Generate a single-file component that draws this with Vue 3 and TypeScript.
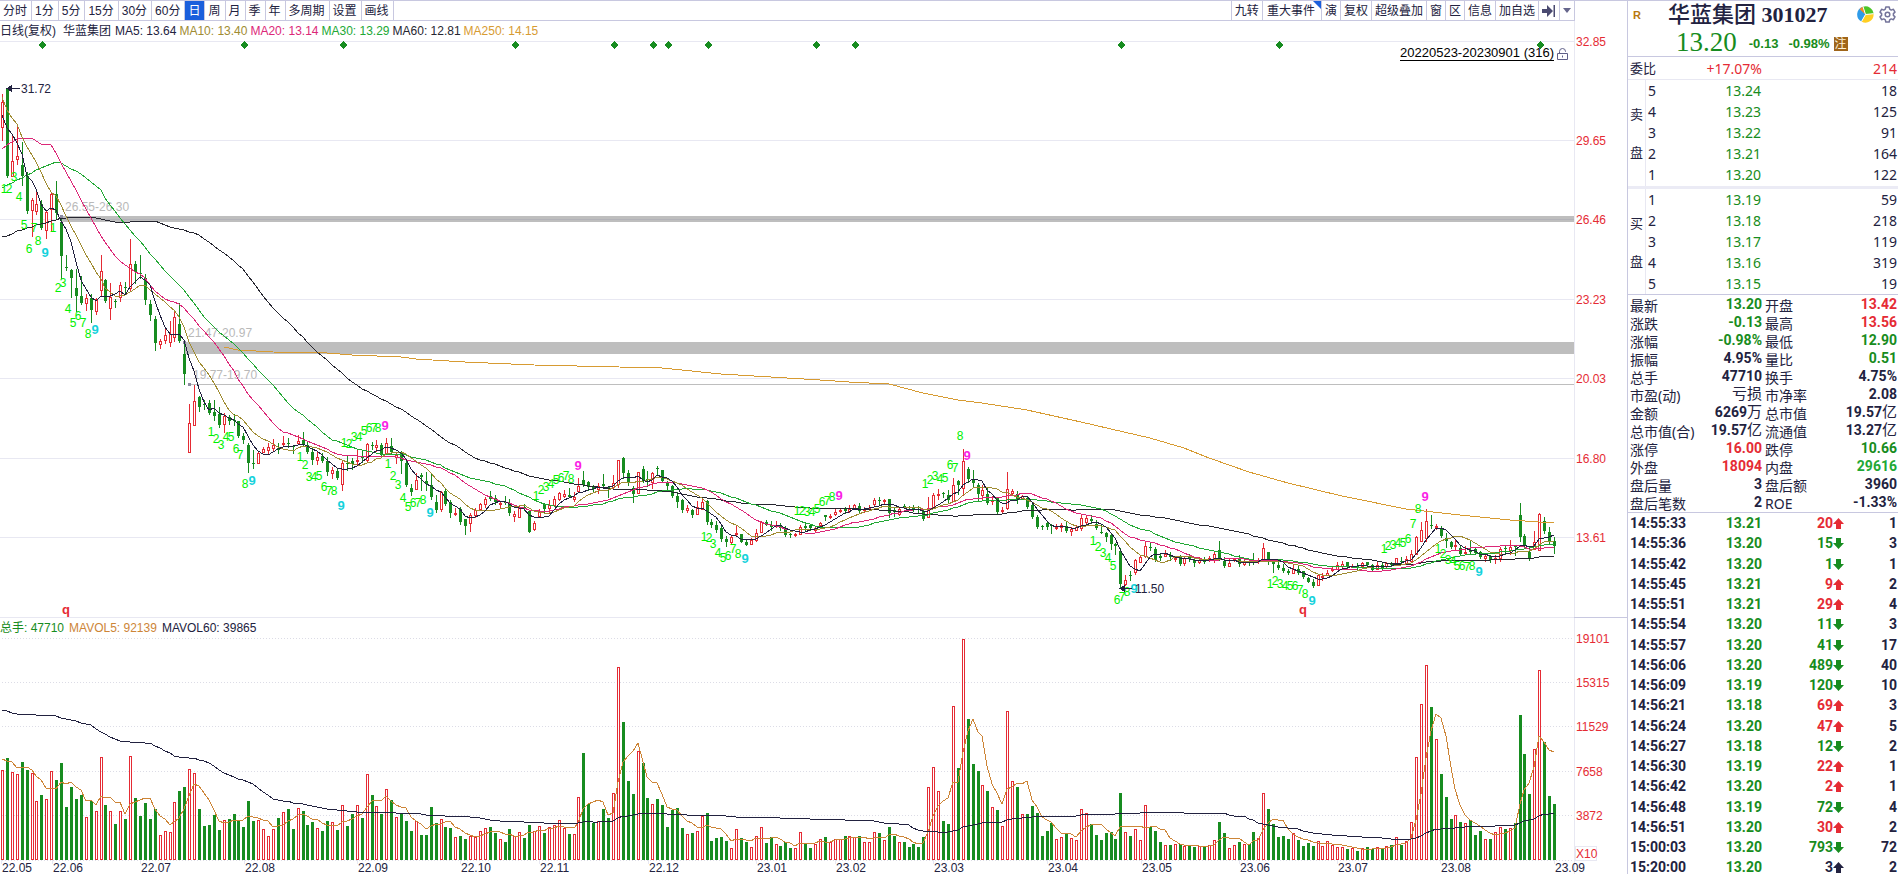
<script setup lang="ts">
import { computed, onBeforeUnmount, onMounted, ref } from 'vue'

type Bar = { up: boolean; high: number; top: number; bottom: number; low: number; vol: number }

// Each bar: r (rise) or g (fall), high, body top, body bottom, low, volume height.
const raw = `
r94,102,127,141,90 g88,89,176,177,102 r134,161,176,177,88 r124,156,159,165,86 g142,165,176,185,98 g172,176,211,213,90
r198,200,210,237,87 r192,204,211,215,59 g200,204,228,229,65 r211,212,230,239,61 r193,194,209,232,89 g181,194,213,218,80
g218,222,256,278,97 g255,267,268,270,53 g269,270,278,297,73 g269,288,296,311,61 g276,296,303,304,65 r294,298,303,311,43
g294,298,310,322,59 r298,299,311,315,49 r255,271,290,297,103 g279,280,301,302,55 r283,297,308,320,49 g299,301,302,307,36
r282,285,297,302,49 g282,287,288,294,41 r239,264,288,292,104 g261,264,272,283,62 g255,273,274,278,44 g274,278,300,304,57
g300,304,315,320,41 g316,319,343,350,51 r339,341,344,349,25 r327,335,340,344,29 r321,334,342,347,28 r311,317,337,342,58
g303,324,341,342,69 g341,354,374,384,73 r404,423,452,452,91 r385,401,425,426,87 g396,397,407,411,51 g400,404,405,409,34
g400,403,413,414,35 g400,412,416,420,45 g407,414,425,427,30 r413,416,424,433,40 g415,417,421,424,41 g414,420,421,425,46
g421,421,436,437,39 g433,436,440,443,33 g443,445,463,472,59 g450,463,464,468,39 r452,453,463,464,40 r447,449,452,452,31
r443,447,450,454,24 r439,445,448,452,31 g443,448,450,453,42 r436,443,444,446,48 g438,443,444,447,51 g445,446,447,453,31
r435,441,443,445,52 g432,440,444,445,49 g441,445,452,453,35 g447,452,460,464,38 r451,457,460,465,32 g453,456,461,462,29
g457,461,472,475,39 r467,470,473,479,38 g469,471,478,479,30 r460,463,484,491,55 g455,463,464,470,34 g458,461,464,469,46
r449,460,461,466,55 g450,457,458,462,42 r443,444,460,462,86 g442,445,446,449,65 r440,445,447,452,54 g443,445,455,456,46
r438,443,453,455,71 g438,446,452,453,60 r453,455,457,464,43 g451,453,461,473,46 g461,463,485,486,39 g484,488,492,495,29
r473,480,489,490,39 g473,475,477,490,25 g472,481,484,490,25 g474,485,497,499,53 g495,502,510,512,37 r491,492,509,512,41
g488,491,504,505,33 g500,502,513,517,32 r508,513,514,516,23 g507,509,522,524,24 g519,519,526,534,21 r513,515,523,532,24
r508,510,515,518,23 r503,504,509,510,29 r497,499,504,508,32 g491,496,499,500,33 g495,498,502,504,27 r501,503,504,509,21
g496,502,503,504,18 g499,503,513,515,31 r511,514,516,522,24 r506,508,517,518,28 g504,507,508,510,22 g510,511,532,532,35
r521,523,529,531,29 r509,512,516,518,34 g503,504,509,512,27 r500,505,508,514,33 r496,499,505,507,35 r492,493,499,501,40
r490,494,496,498,32 g488,495,497,497,26 r492,497,499,502,26 r478,486,491,493,63 g471,480,485,486,107 g481,482,487,490,56
g485,487,489,492,37 r483,486,489,494,39 g474,484,486,487,51 g486,487,488,497,42 r475,483,487,489,67 r460,460,484,488,193
g457,458,473,478,138 g470,473,482,485,79 g486,488,494,502,66 r472,472,493,494,109 g466,469,481,482,97 g471,479,480,486,62
r472,473,482,489,56 g466,468,469,475,61 g470,470,481,482,55 g481,482,486,489,33 g485,486,496,497,50 g492,496,502,507,52
g499,500,510,512,32 r505,508,510,513,26 g509,510,515,517,27 r501,507,514,515,29 r497,502,509,510,44 g500,501,522,524,47
g519,522,525,527,19 g521,525,530,532,22 g526,528,539,541,23 g536,539,542,546,19 r535,537,542,544,12 r525,533,534,537,31
g534,534,542,542,22 g539,542,545,545,18 r538,540,544,545,13 r529,533,540,542,24 r521,522,532,533,33 g520,522,525,525,17
g521,525,527,530,23 r521,525,526,528,16 g523,525,528,530,14 g526,529,535,536,18 g533,534,535,537,12 r533,534,535,537,12
r525,527,534,535,28 g522,526,528,531,16 g524,525,528,530,12 r526,528,530,532,16 r522,523,525,525,21 g515,515,517,520,23
r514,516,517,519,18 r509,512,514,516,21 r508,510,511,513,21 g507,508,511,513,24 r505,509,511,513,24 r504,505,508,508,23
g503,506,511,512,24 r507,509,510,513,18 r505,508,509,510,18 r498,500,504,506,28 g497,500,501,504,27 r499,500,501,504,20
g499,499,513,517,33 g507,510,512,516,24 r508,509,514,516,18 g504,506,507,508,18 g506,507,508,509,13 g505,508,509,511,16
g506,509,510,512,13 g509,511,519,520,23 r497,508,517,518,73 r493,495,508,509,93 r489,494,495,500,69 g492,493,494,497,39
g490,495,500,502,36 r478,485,501,501,154 g480,481,485,494,92 r449,461,488,496,221 g467,469,479,482,141 g470,480,483,487,96
g483,485,494,501,89 r485,490,495,500,75 g488,494,503,504,69 r496,500,501,505,53 g497,498,512,513,50 r507,510,511,513,34
r472,489,508,510,149 r489,491,493,495,79 g491,494,499,503,73 r495,496,498,499,46 g497,498,507,508,46 g503,505,517,518,54
g515,517,527,528,47 g525,526,527,529,24 g522,523,527,529,29 g524,525,526,533,37 r524,527,528,530,21 r523,525,527,532,23
g521,526,531,532,27 r527,529,531,536,22 r525,527,530,531,20 r515,518,528,531,51 r515,518,522,524,47 g515,519,521,523,36
g520,524,528,529,25 g524,532,533,533,20 g532,533,537,541,27 g534,535,544,549,28 g543,544,546,554,21 g548,551,584,588,67
r575,580,584,586,28 g571,575,576,580,24 r559,560,572,575,31 r555,557,562,563,20 r542,546,556,558,55 g542,547,548,550,33
g547,549,560,561,29 g554,556,558,560,18 r550,554,556,557,15 g552,555,557,560,15 r556,558,559,562,16 g555,557,564,565,16
r556,558,563,566,14 g554,556,559,561,14 g557,560,563,566,13 r557,560,562,564,14 g557,561,562,563,13 r556,558,560,562,15
r552,554,560,563,20 g541,550,558,560,38 g557,561,566,567,27 r558,563,566,567,12 r558,559,560,562,15 g555,559,564,566,18
r558,562,564,566,16 g560,562,563,565,16 g553,562,563,564,28 r558,560,561,564,22 r543,548,559,561,67 g552,552,561,564,51
g561,562,564,572,36 g562,565,568,569,23 g564,568,571,572,24 g569,571,573,574,21 r565,569,573,573,27 g566,569,573,574,20
g571,571,577,578,14 g577,578,582,582,17 g579,582,586,587,14 r574,575,585,586,19 r573,576,577,581,14 r570,573,575,576,19
r566,569,570,572,15 r562,565,569,570,13 r561,564,566,568,13 g562,562,567,568,11 r564,566,567,568,12 g563,566,567,570,9
r562,563,566,567,12 g562,562,565,566,13 g564,565,570,571,11 r562,565,569,570,13 g562,565,568,570,11 r562,563,566,568,14
g562,564,565,566,15 r558,558,564,565,23 g557,561,562,564,15 r556,559,563,564,19 r550,554,561,562,38 r536,537,554,554,103
r522,530,541,542,156 r509,521,538,542,195 g515,525,526,528,153 r524,526,527,530,121 g526,528,536,537,86 g533,538,541,547,63
g541,542,547,548,41 r539,545,546,550,45 g546,548,554,554,38 r546,552,553,554,37 g540,550,552,554,40 g548,549,553,554,25
g551,552,557,558,29 r553,556,558,562,21 g555,556,560,562,21 r555,558,559,564,28 r547,549,558,562,33 g546,548,549,554,31
r540,547,550,555,32 g545,546,547,555,37 g503,515,537,541,145 g534,536,546,547,106 g547,552,558,560,66 r531,542,549,549,111
r513,514,550,551,190 g517,521,531,533,118 g527,532,542,543,64 g537,541,546,553,56`

const bars: Bar[] = raw.trim().split(/\s+/).map((s) => {
  const [high, top, bottom, low, vol] = s.slice(1).split(',').map(Number)
  return { up: s[0] === 'r', high, top, bottom, low, vol }
})

const AXIS_WIDTH = 53
const VOL_BASE = 860

const host = ref<HTMLElement | null>(null)
const width = ref(1627)
let observer: ResizeObserver | null = null
onMounted(() => {
  if (!host.value) return
  observer = new ResizeObserver(([entry]) => (width.value = Math.round(entry.contentRect.width)))
  observer.observe(host.value)
})
onBeforeUnmount(() => observer?.disconnect())

const plotW = computed(() => width.value - AXIS_WIDTH)
const step = computed(() => (plotW.value - 22) / (bars.length - 1))
const px = (i: number) => Math.round(2 + i * step.value)

const upWicks = computed(() =>
  bars.map((b, i) => (b.up ? `M${px(i) + 0.5} ${b.high}V${b.top}M${px(i) + 0.5} ${b.bottom}V${b.low}` : '')).join(''),
)
const upBodies = computed(() =>
  bars.map((b, i) => (b.up ? `M${px(i) - 0.5} ${b.top + 0.5}h2v${Math.max(1, b.bottom - b.top)}h-2z` : '')).join(''),
)
const downBodies = computed(() =>
  bars
    .map((b, i) =>
      b.up
        ? ''
        : `M${px(i)} ${b.high}h1V${b.low + 1}h-1zM${px(i) - 1} ${b.top}h3v${Math.max(1, b.bottom - b.top)}h-3z`,
    )
    .join(''),
)
const upVols = computed(() =>
  bars.map((b, i) => (b.up ? `M${px(i) - 0.5} ${VOL_BASE - b.vol + 0.5}h2V${VOL_BASE - 0.5}h-2z` : '')).join(''),
)
const downVols = computed(() =>
  bars.map((b, i) => (b.up ? '' : `M${px(i) - 1} ${VOL_BASE - b.vol}h3V${VOL_BASE}h-3z`)).join(''),
)

// Expands sparse [index, value] knots to one value for each index.
function spread(knots: number[][]): number[] {
  const out: number[] = []
  for (let k = 0; k < knots.length - 1; k++) {
    const [a, va] = knots[k]
    const [b, vb] = knots[k + 1]
    for (let i = a; i < b; i++) out.push(va + ((vb - va) * (i - a)) / (b - a))
  }
  return out
}

// Moving average; `lead` carries the averages whose window starts before the first bar.
function average(values: number[], n: number, lead: number[]): number[] {
  return values.map((_, i) =>
    i < n - 1 ? lead[Math.min(i, lead.length - 1)] : values.slice(i - n + 1, i + 1).reduce((s, v) => s + v, 0) / n,
  )
}

const closes = bars.map((b) => (b.up ? b.top : b.bottom))
const vols = bars.map((b) => b.vol)
const ma5 = average(closes, 5, [115, 128, 134, 143])
const ma10 = average(closes, 10, [97, 110, 118, 124, 137, 147, 155, 162, 172])
const ma20 = average(closes, 20, [149, 145, 142, 139, 138, 138, 138, 141, 144, 144, 145, 153, 163, 172, 181, 190, 200, 209, 218])
const ma30 = average(closes, 30, spread([[0, 188], [5, 175], [8, 168], [11, 162], [12, 163], [16, 174], [20, 190], [22, 205], [25, 224], [29, 247]]))
const ma60 = average(closes, 60, spread([[0, 236], [1, 236], [3, 231], [8, 224], [12, 218], [15, 217], [18, 217], [21, 220], [24, 223], [27, 221], [31, 221], [34, 227], [37, 230], [40, 235], [43, 246], [46, 257], [49, 269], [52, 289], [54, 302], [56, 313], [59, 327]]))
const vma5 = average(vols, 5, [101, 99, 98, 92])
const vma60 = average(vols, 60, spread([[0, 150], [3, 146], [10, 145], [13, 141], [18, 135], [20, 128], [24, 119], [30, 117], [32, 112], [35, 104], [39, 102], [42, 97], [45, 87], [51, 76], [55, 61], [59, 58]]))
const ma250Knots = [[45, 347], [48, 350], [55, 352], [66, 353], [71, 355], [81, 357], [84, 359], [94, 362], [108, 365], [134, 368], [146, 374], [166, 380], [172, 382], [180, 384], [187, 393], [194, 400], [199, 403], [208, 410], [219, 422], [225, 429], [233, 438], [240, 448], [245, 458], [253, 472], [261, 483], [272, 496], [285, 509], [296, 515], [306, 520], [315, 523]]

const line = (vals: number[]) => vals.map((v, i) => `${px(i)},${Math.round(v)}`).join(' ')
const volLine = (vals: number[]) => vals.map((v, i) => `${px(i)},${Math.round(VOL_BASE - v)}`).join(' ')
const priceLines = computed(() => [
  { cls: 'ma250', points: ma250Knots.map(([i, y]) => `${px(i)},${y}`).join(' ') },
  { cls: 'ma60', points: line(ma60) },
  { cls: 'ma30', points: line(ma30) },
  { cls: 'ma20', points: line(ma20) },
  { cls: 'ma10', points: line(ma10) },
  { cls: 'ma5', points: line(ma5) },
])

// Nine-turn counts: first bar, whether the run is a top, label heights for 1 to 9.
const runs = [
  { at: 0, top: false, ys: [189, 189, 177, 197, 225, 249, 228, 241, 253] },
  { at: 10, top: false, ys: [228, 288, 283, 309, 323, 316, 323, 334, 330] },
  { at: 42, top: false, ys: [432, 439, 445, 437, 437, 449, 455, 484, 481] },
  { at: 60, top: false, ys: [457, 465, 477, 477, 476, 487, 491, 491, 506] },
  { at: 69, top: true, ys: [443, 444, 437, 437, 431, 428, 428, 428, 426] },
  { at: 78, top: false, ys: [464, 476, 485, 498, 507, 503, 503, 500, 513] },
  { at: 108, top: true, ys: [496, 490, 487, 484, 480, 478, 476, 479, 466] },
  { at: 142, top: false, ys: [537, 538, 544, 553, 558, 556, 549, 554, 559] },
  { at: 161, top: true, ys: [511, 511, 512, 512, 509, 502, 501, 497, 496] },
  { at: 187, top: true, ys: [484, 480, 476, 479, 478, 465, 468, 436, 456] },
  { at: 221, top: false, ys: [541, 547, 553, 558, 566, 600, 597, 592, 589] },
  { at: 257, top: false, ys: [584, 581, 584, 586, 586, 586, 590, 594, 601] },
  { at: 280, top: true, ys: [549, 546, 545, 543, 543, 539, 524, 509, 497] },
  { at: 291, top: false, ys: [549, 554, 560, 561, 566, 566, 567, 566, 572] },
]
const counts = computed(() =>
  runs.flatMap((r) =>
    r.ys.map((y, k) => ({
      n: k + 1,
      x: px(r.at + k) + (k === 8 ? 4 : 2),
      y: y + 4,
      cls: k < 8 ? 'count' : r.top ? 'nine top' : 'nine low',
    })),
  ),
)

const gaps = [
  { at: 12, y: 216, h: 6, text: '26.55-26.30' },
  { at: 37, y: 342, h: 12, text: '21.47-20.97' },
  { at: 38, y: 384, h: 1, text: '19.77-19.70' },
]
const diamonds = [8, 49, 69, 104, 124, 132, 135, 143, 165, 173, 227, 259, 312]
const priceTicks = [[32.85, 41], [29.65, 140], [26.46, 219], [23.23, 299], [20.03, 378], [16.8, 458], [13.61, 537]]
const volTicks = [[19101, 638], [15315, 682], [11529, 726], [7658, 771], [3872, 815]]
const months: [string, number][] = [
  ['22.05', 0], ['22.06', 10.4], ['22.07', 28.3], ['22.08', 49.4], ['22.09', 72.3], ['22.10', 93.2], ['22.11', 109.2],
  ['22.12', 131.4], ['23.01', 153.2], ['23.02', 169.3], ['23.03', 189.2], ['23.04', 212.4], ['23.05', 231.3],
  ['23.06', 251.3], ['23.07', 271.2], ['23.08', 292.1], ['23.09', 315.2],
]

const periods = ['分时', '1分', '5分', '15分', '30分', '60分', '日', '周', '月', '季', '年', '多周期', '设置', '画线']
const tools = ['九转', '重大事件', '演', '复权', '超级叠加', '窗', '区', '信息', '加自选']
const active = ref('日')

const legend = [
  ['ma5', 'MA5: 13.64'], ['ma10', 'MA10: 13.40'], ['ma20', 'MA20: 13.14'],
  ['ma30', 'MA30: 13.29'], ['ma60', 'MA60: 12.81'], ['ma250', 'MA250: 14.15'],
]

const book = [
  { name: ['卖', '盘'], rows: [[5, '13.24', 18], [4, '13.23', 125], [3, '13.22', 91], [2, '13.21', 164], [1, '13.20', 122]] },
  { name: ['买', '盘'], rows: [[1, '13.19', 59], [2, '13.18', 218], [3, '13.17', 119], [4, '13.16', 319], [5, '13.15', 19]] },
]

// label, number, colour class, unit
const stats: string[][] = [
  ['最新', '13.20', 'down', ''], ['开盘', '13.42', 'up', ''],
  ['涨跌', '-0.13', 'down', ''], ['最高', '13.56', 'up', ''],
  ['涨幅', '-0.98%', 'down', ''], ['最低', '12.90', 'down', ''],
  ['振幅', '4.95%', '', ''], ['量比', '0.51', 'down', ''],
  ['总手', '47710', '', ''], ['换手', '4.75%', '', ''],
  ['市盈(动)', '', '', '亏损'], ['市净率', '2.08', '', ''],
  ['金额', '6269', '', '万'], ['总市值', '19.57', '', '亿'],
  ['总市值(合)', '19.57', '', '亿'], ['流通值', '13.27', '', '亿'],
  ['涨停', '16.00', 'up', ''], ['跌停', '10.66', 'down', ''],
  ['外盘', '18094', 'up', ''], ['内盘', '29616', 'inner', ''],
  ['盘后量', '3', '', ''], ['盘后额', '3960', '', ''],
  ['盘后笔数', '2', '', ''], ['ROE', '-1.33%', '', ''],
]

const trades: [string, string, number, string, number][] = [
  ['14:55:33', '13.21', 20, 'up', 1], ['14:55:36', '13.20', 15, 'down', 3], ['14:55:42', '13.20', 1, 'down', 1],
  ['14:55:45', '13.21', 9, 'up', 2], ['14:55:51', '13.21', 29, 'up', 4], ['14:55:54', '13.20', 11, 'down', 3],
  ['14:55:57', '13.20', 41, 'down', 17], ['14:56:06', '13.20', 489, 'down', 40], ['14:56:09', '13.19', 120, 'down', 10],
  ['14:56:21', '13.18', 69, 'up', 3], ['14:56:24', '13.20', 47, 'up', 5], ['14:56:27', '13.18', 12, 'down', 2],
  ['14:56:30', '13.19', 22, 'up', 1], ['14:56:42', '13.20', 2, 'up', 1], ['14:56:48', '13.19', 72, 'down', 4],
  ['14:56:51', '13.20', 30, 'up', 2], ['15:00:03', '13.20', 793, 'down', 72], ['15:20:00', '13.20', 3, 'flat', 2],
]
</script>

<template>
  <div class="app">
    <main class="main">
      <nav class="toolbar">
        <div class="group left">
          <button v-for="p in periods" :key="p" type="button" :class="{ on: p === active }" @click="active = p">{{ p }}</button>
        </div>
        <div class="group right">
          <button v-for="t in tools" :key="t" type="button" :class="{ flagged: t === '重大事件' }">{{ t }}</button>
          <button type="button" class="icon" aria-label="收起侧栏">
            <svg width="14" height="12" viewBox="0 0 14 12"><path d="M0 4h5V0l6 6-6 6V8H0zM11.500 0h1.500v12h-1.500z" fill="#4a4a70" /></svg>
          </button>
          <button type="button" class="icon small" aria-label="更多">
            <svg width="8" height="5" viewBox="0 0 8 5"><path d="M0 0h8L4 5z" fill="#66668c" /></svg>
          </button>
        </div>
      </nav>

      <div ref="host" class="charts">
        <div class="caption">
          <span class="dark">日线(复权)</span><span class="dark stock">华蓝集团</span>
          <span v-for="[cls, text] in legend" :key="cls" :class="cls">{{ text }}</span>
        </div>
        <div class="range">
          <button type="button">20220523-20230901 (316)</button>
          <svg width="11" height="12" viewBox="0 0 11 12" fill="none" stroke="#5f5f88">
            <path d="M.5 5.500h10v6H.5zM2.500 5V3.500a3 3 0 0 1 6 0V4M5.500 7.500v2" />
          </svg>
        </div>

        <svg class="pane" :viewBox="`0 41 ${width} 577`">
          <g class="grid">
            <path v-for="[label, y] in priceTicks" :key="label" :d="`M0 ${y + 0.5}H${plotW}`" />
            <path :d="`M0 617.5H${plotW}M${plotW + 0.5} 21V618`" />
          </g>
          <path class="edge" :d="`M${plotW} 617.5H${width}`" />
          <text v-for="[label, y] in priceTicks" :key="label" class="tick" :x="plotW + 2" :y="y + 5">{{ label.toFixed(2) }}</text>

          <g v-for="g in gaps" :key="g.text">
            <rect class="gap" :x="px(g.at)" :y="g.y" :width="plotW - px(g.at)" :height="g.h" />
            <rect class="dot" :x="px(g.at) - 1" :y="g.y - 1" width="3" height="3" />
            <text class="gaplabel" :x="px(g.at) + 4" :y="g.y - 5">{{ g.text }}</text>
          </g>
          <path class="grid mid" :d="`M${px(12)} 219.5H${plotW}`" />

          <path v-for="d in diamonds" :key="d" class="diamond" :d="`M${px(d) + 1} 41l4 4-4 4-4-4z`" />

          <path class="rise" :d="upWicks" />
          <path class="rise body" :d="upBodies" />
          <path class="fall" :d="downBodies" />
          <polyline v-for="l in priceLines" :key="l.cls" class="curve" :class="l.cls" :points="l.points" />

          <text v-for="(c, k) in counts" :key="k" :class="c.cls" :x="c.x" :y="c.y">{{ c.n }}</text>
          <text class="quarter" :x="px(13)" y="614">q</text>
          <text class="quarter" :x="px(264)" y="614">q</text>

          <g class="note">
            <path :d="`M${px(1)} 88.5h13`" /><path class="head" :d="`M${px(1)} 88.500l4-2.500v5z`" />
            <text :x="px(1) + 14" y="93">31.72</text>
            <path :d="`M${px(227)} 588.500h12`" /><path class="head" :d="`M${px(227)} 588.500l4-2.500v5z`" />
            <text :x="px(227) + 15" y="593">11.50</text>
          </g>
        </svg>

        <div class="caption volume">
          <span class="down">总手: 47710</span><span class="vol5">MAVOL5: 92139</span><span class="dark">MAVOL60: 39865</span>
        </div>
        <svg class="pane" :viewBox="`0 638 ${width} 236`">
          <g class="grid dotted">
            <path v-for="[label, y] in volTicks" :key="label" :d="`M2 ${y + 0.5}H${plotW}`" />
            <path :d="`M2 860.5H${plotW}`" />
          </g>
          <path class="grid" :d="`M${plotW + 0.5} 618V874`" />
          <text v-for="[label, y] in volTicks" :key="label" class="tick" :x="plotW + 2" :y="y + 5">{{ label }}</text>
          <rect class="grid" :x="plotW + 1.5" y="846.500" width="21" height="14" />
          <text class="tick" :x="plotW + 2" y="858">X10</text>
          <path class="rise" :d="upVols" />
          <path class="fall" :d="downVols" />
          <polyline class="curve vol5" :points="volLine(vma5)" />
          <polyline class="curve ma5" :points="volLine(vma60)" />
          <g v-for="[m, i] in months" :key="m">
            <path class="grid" :d="`M${px(i) - 0.5} 860v4`" />
            <text class="month" :x="px(i)" y="872">{{ m }}</text>
          </g>
        </svg>
      </div>
    </main>

    <aside class="side">
      <header class="quote">
        <div class="title">
          <b class="margin">R</b>
          <h1>华蓝集团 <b>301027</b></h1>
          <span class="icons">
            <svg width="17" height="17" viewBox="0 0 17 17">
              <path d="M8.500 8.500L6 .7A8 8 0 0 0 4.500 15.500z" fill="#2f9be8" />
              <path d="M8.500 8.500L6 .7a8 8 0 0 1 10.500 7z" fill="#4cc528" />
              <path d="M8.500 8.500l8-.8A8 8 0 0 1 4.500 15.500z" fill="#ffcf24" />
              <path d="M8.500 8.500L2.500 3.200A8 8 0 0 1 6 .7z" fill="#f08a28" />
              <path d="M8.500 8.500L6 .7M8.500 8.500l8-.8M8.500 8.500l-4 7" stroke="#fff" fill="none" />
            </svg>
            <svg width="17" height="17" viewBox="0 0 17 17" fill="none" stroke="#74749a" stroke-width="1.500">
              <path d="M6.800 1h3.400l.5 2.200 1.500.9 2.200-.8 1.600 2.800-1.600 1.500v1.800l1.600 1.500-1.600 2.800-2.200-.8-1.500.9-.5 2.200H6.800l-.5-2.200-1.500-.9-2.200.8L1 10.900l1.600-1.500V7.600L1 6.100l1.600-2.800 2.200.8 1.500-.9z" stroke-linejoin="round" />
              <circle cx="8.500" cy="8.500" r="2.300" />
            </svg>
          </span>
        </div>
        <div class="last down">
          <span class="price">13.20</span><b>-0.13</b><b>-0.98%</b><span class="badge">注</span>
        </div>
      </header>

      <div class="ratio"><span>委比</span><span class="up">+17.07%</span><span class="up">214</span></div>

      <div v-for="(b, k) in book" :key="k" class="book">
        <div class="bookname"><span v-for="c in b.name" :key="c">{{ c }}</span></div>
        <table>
          <tbody>
            <tr v-for="[n, price, qty] in b.rows" :key="n">
              <th scope="row">{{ n }}</th>
              <td class="down">{{ price }}</td>
              <td>{{ qty }}</td>
            </tr>
          </tbody>
        </table>
      </div>

      <dl class="stats">
        <div v-for="[label, num, cls, unit] in stats" :key="label">
          <dt>{{ label }}</dt>
          <dd :class="cls">{{ num }}<span v-if="unit">{{ unit }}</span></dd>
        </div>
      </dl>

      <div class="trades">
        <table>
          <tbody>
            <tr v-for="[time, price, qty, dir, n] in trades" :key="time">
              <td class="time">{{ time }}</td>
              <td class="at down">{{ price }}</td>
              <td class="qty" :class="dir">
                {{ qty }}<svg width="11" height="11" viewBox="0 0 11 11">
                  <path v-if="dir === 'down'" d="M3 0h5v5h3l-5.500 6L0 5h3z" fill="currentColor" />
                  <path v-else d="M3 11h5V6h3L5.500 0 0 6h3z" fill="currentColor" />
                </svg>
              </td>
              <td class="num">{{ n }}</td>
            </tr>
          </tbody>
        </table>
      </div>
    </aside>
  </div>
</template>

<style>
body { margin: 0; background: #fff; overflow: hidden; }
</style>

<style scoped>
.app {
  display: grid;
  grid-template-columns: minmax(0, 1fr) 271px;
  height: 100vh;
  overflow: hidden;
  box-sizing: border-box;
  color: #222240;
  font: 12px/18px "Liberation Sans", "Noto Sans CJK SC", sans-serif;
}
.main { border-top: 1px solid #c8c8e0; min-width: 0; }
.toolbar {
  display: flex;
  justify-content: space-between;
  box-sizing: border-box;
  height: 20px;
  margin-right: 52px;
  border-bottom: 1px solid #c8c8e0;
}
.group { display: flex; }
.group button {
  position: relative;
  border: 0;
  border-right: 1px solid #c8c8e0;
  padding: 0 4px 0 3px;
  background: none;
  color: inherit;
  font: inherit;
  white-space: nowrap;
}
.group button.on { background: #1a5fdc; color: #fff; }
.right { border-left: 1px solid #c8c8e0; }
.right button { padding: 0 3px; }
.right .flagged { padding: 0 6px 0 4px; }
.flagged::after {
  content: "";
  position: absolute;
  top: 0;
  right: 0;
  border-top: 8px solid #1a5fdc;
  border-left: 8px solid transparent;
}
.icon svg { display: block; }

.charts { position: relative; }
.caption { display: flex; gap: 3px; height: 20px; line-height: 20px; white-space: pre; }
.caption.volume { gap: 5px; }
.stock { margin: 0 1px 0 4px; }
.range { position: absolute; top: 25px; right: 59px; display: flex; gap: 3px; align-items: center; }
.range button {
  border: 0;
  border-bottom: 1px solid #000;
  padding: 0;
  background: none;
  color: #000;
  font: 13px/14px "Liberation Sans", sans-serif;
}
.pane { display: block; width: 100%; height: auto; overflow: visible; }
.pane path, .pane rect, .curve { shape-rendering: crispEdges; }
.grid, .grid path { fill: none; stroke: #e8e8f2; }
.grid.mid { stroke: #b2b2b8; }
.dotted path { stroke-dasharray: 1 2; stroke: #dcdce6; }
.edge { stroke: #c8c8e0; }
.tick { fill: #e52b34; }
.gap { fill: #bebebe; }
.dot { fill: #8c8ca0; }
.gaplabel { fill: #b9b9b9; }
.diamond { fill: #178c20; }
.rise { fill: none; stroke: #e52b34; }
.rise.body { fill: #fff; }
.fall { fill: #178c20; }
.curve { fill: none; }
.ma5 { color: #222240; }
.ma10 { color: #a08c32; }
.ma20 { color: #dc2878; }
.ma30 { color: #22a835; }
.ma60 { color: #262630; }
.ma250 { color: #d79b32; }
.vol5 { color: #cd8537; }
.curve { stroke: currentColor; }
.count { fill: #00f000; text-anchor: middle; }
.nine { font-size: 13px; font-weight: bold; text-anchor: middle; }
.nine.low { fill: #14d2dc; }
.nine.top { fill: #fa1ee6; }
.quarter { fill: #e52b34; font-size: 13px; font-weight: bold; text-anchor: middle; }
.note path { stroke: #222240; }
.note .head, .note text, .month { fill: #222240; }

.dark { color: #222240; }
.up { color: #e52b34; }
.down { color: #178c20; }
.inner { color: #22a835; }

.side {
  display: flex;
  flex-direction: column;
  min-height: 0;
  border-top: 1px solid #c8c8e0;
  border-left: 1px solid #c8c8e0;
}
.quote { height: 55px; border-bottom: 1px solid #c8c8e0; }
.title { display: flex; align-items: center; height: 27px; padding: 0 2px 0 5px; }
.margin { color: #b8780f; font-size: 11px; }
h1 { margin: 0 auto 0 27px; font: 500 22px/27px "Liberation Serif", "Noto Sans CJK SC", serif; white-space: nowrap; }
.icons { display: flex; gap: 5px; }
.last { display: flex; align-items: center; height: 28px; padding-left: 48px; font-size: 13px; }
.price { font: 27px/28px "Liberation Serif", serif; margin-right: 12px; }
.last b { margin-right: 10px; padding-top: 4px; }
.last b + b { margin-right: 4px; }
.badge { margin-top: 4px; background: #a0651a; color: #fff3d8; font-size: 12px; line-height: 14px; width: 14px; text-align: center; }
.ratio {
  display: grid;
  grid-template-columns: 1fr 70px 135px;
  height: 22px;
  padding: 0 1px 0 2px;
  border-bottom: 1px solid #e8e8f2;
  font: 14px/23px "Noto Sans", "Noto Sans CJK SC", sans-serif;
}
.ratio span + span { text-align: right; }
.ratio span:first-child { font-size: 13px; }
.book { display: flex; height: 106px; font: 14px/20px "Noto Sans", "Noto Sans CJK SC", sans-serif; }
.book + .book { height: 105px; border-top: 3px solid #ebebf5; }
.bookname {
  display: flex;
  flex-direction: column;
  justify-content: center;
  gap: 18px;
  width: 17px;
  border-right: 1px solid #e8e8f2;
  font-size: 13px;
  text-align: center;
}
.book table { flex: 1; height: 100%; border-collapse: collapse; table-layout: fixed; }
.book th { width: 30px; padding: 0 0 0 2px; font-weight: normal; text-align: left; }
.book td { padding: 0 1px 0 0; text-align: right; }
.book td:nth-child(2) { width: 83px; }
.stats {
  display: grid;
  grid-template-columns: 135px 1fr;
  margin: 0;
  padding-bottom: 1px;
  border-top: 1px solid #c8c8e0;
  border-bottom: 1px solid #c8c8e0;
}
.stats div { display: flex; justify-content: space-between; height: 18px; padding: 0 1px 0 2px; }
dt { font: 14px/22px "Noto Sans", "Noto Sans CJK SC", sans-serif; white-space: nowrap; }
dd { margin: 0; font: bold 14px/19px Roboto, "Noto Sans CJK SC", sans-serif; }
dd span { font-weight: 400; font-size: 15px; }
.trades { flex: 1; min-height: 0; overflow: hidden; }
.trades table {
  width: 100%;
  height: 101%;
  border-collapse: collapse;
  table-layout: fixed;
  font: bold 14px/18px Roboto, sans-serif;
}
.trades td { padding: 0; text-align: right; }
.trades .time { width: 66px; padding-left: 2px; text-align: left; }
.trades .at { width: 66px; }
.trades .qty { width: 82px; }
.trades .num { padding-right: 1px; }
.qty svg { vertical-align: -1px; }
</style>
